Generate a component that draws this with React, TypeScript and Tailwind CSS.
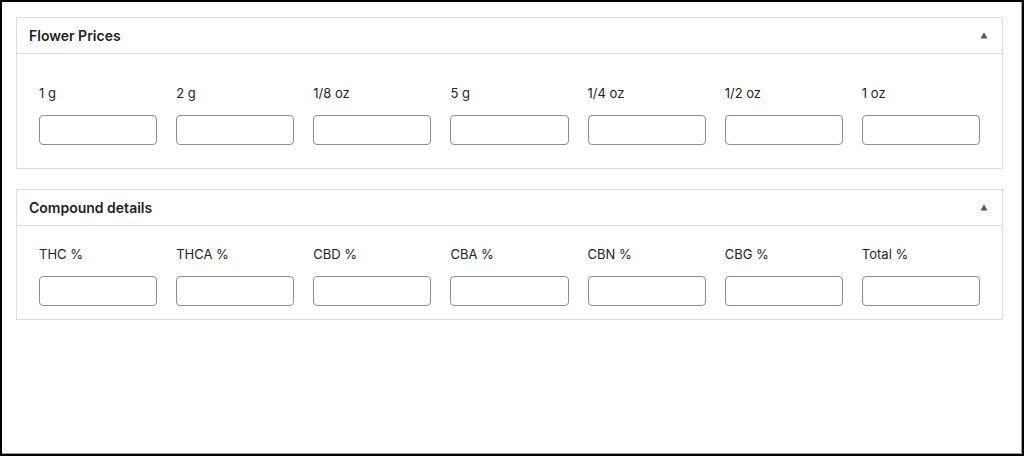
const flowerFields = ["1 g", "2 g", "1/8 oz", "5 g", "1/4 oz", "1/2 oz", "1 oz"];
const compoundFields = ["THC %", "THCA %", "CBD %", "CBA %", "CBN %", "CBG %", "Total %"];

function Caret() {
  return (
    <svg width="8" height="7" viewBox="0 0 8 7" className="mr-[14px]">
      <path d="M4 0.5 L7.5 6.5 L0.5 6.5 Z" fill="#50575e" />
    </svg>
  );
}

function FieldGrid({ fields }: { fields: string[] }) {
  return (
    <div className="grid grid-cols-7 gap-x-[19px]">
      {fields.map((f) => (
        <label key={f} className="flex flex-col">
          <span className="h-5 text-[13px] leading-5 text-[#1d2327]">{f}</span>
          <input
            type="text"
            className="mt-3 h-[30px] w-full rounded-[4px] border border-[#8c8f94] bg-white"
          />
        </label>
      ))}
    </div>
  );
}

function MetaBox({
  title,
  fields,
  bodyClass,
}: {
  title: string;
  fields: string[];
  bodyClass: string;
}) {
  return (
    <section className="w-[987px] border border-[#dcdcde] bg-white">
      <header className="flex h-[36px] items-center justify-between border-b border-[#dcdcde] pl-[12px]">
        <h2 className="text-[14px] font-semibold text-[#1d2327]">{title}</h2>
        <Caret />
      </header>
      <div className={bodyClass}>
        <FieldGrid fields={fields} />
      </div>
    </section>
  );
}

export default function App() {
  return (
    <div
      className="h-[456px] w-[1024px] border-2 border-black bg-white pl-[14px] pt-[15px] shadow-[inset_-1px_-1px_0_#9a9a9a]"
      style={{ fontFamily: "Inter, 'Noto Sans', sans-serif" }}
    >
      <MetaBox
        title="Flower Prices"
        fields={flowerFields}
        bodyClass="px-[22px] pt-[29px] pb-[23px]"
      />
      <div className="h-[20px]" />
      <MetaBox
        title="Compound details"
        fields={compoundFields}
        bodyClass="px-[22px] pt-[18px] pb-[13px]"
      />
    </div>
  );
}
